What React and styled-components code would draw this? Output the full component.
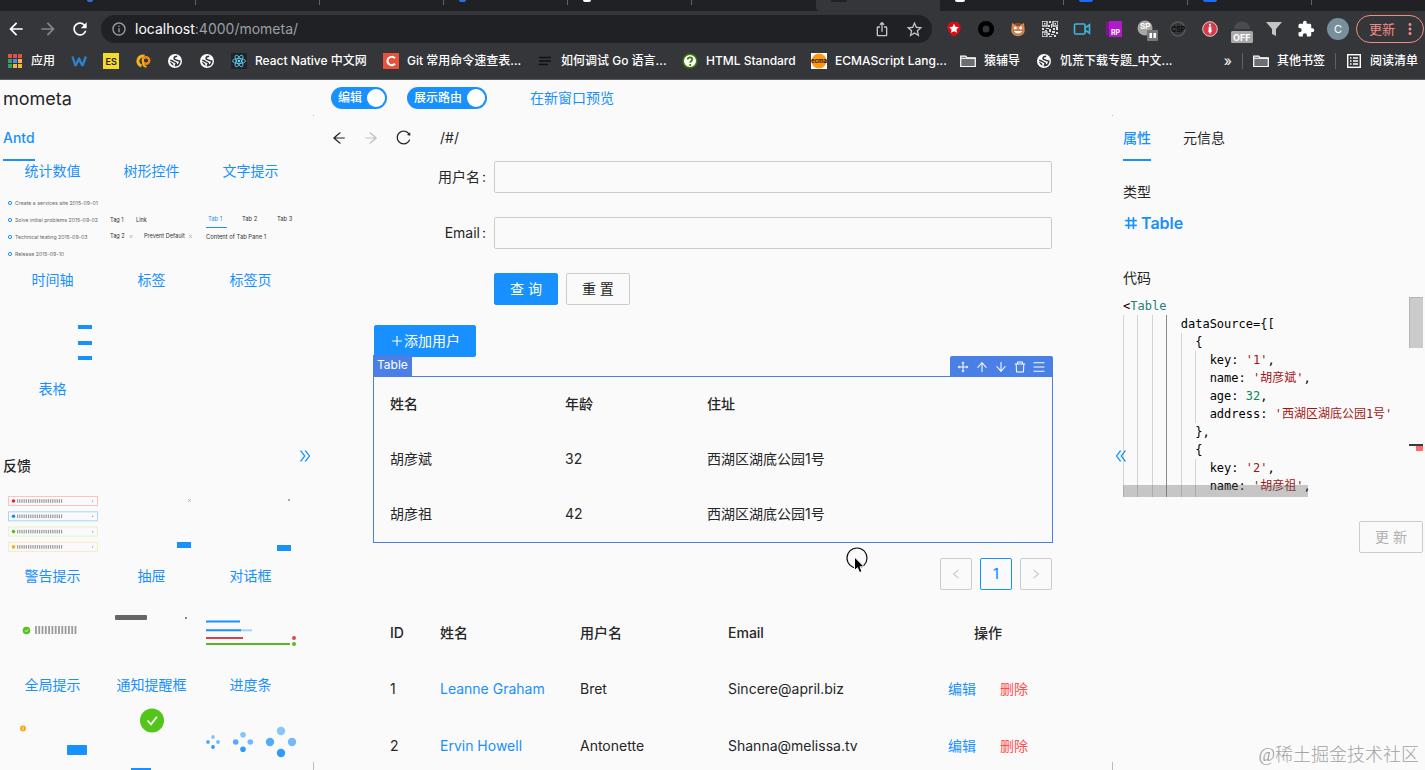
import React from 'react';
import styled, { createGlobalStyle, css } from 'styled-components';
import {
  AiOutlineArrowLeft, AiOutlineArrowRight, AiOutlineArrowUp, AiOutlineArrowDown, AiOutlineReload,
  AiOutlineDoubleRight, AiOutlineDoubleLeft, AiOutlineDrag, AiOutlineDelete, AiOutlineMenu,
  AiOutlineLeft, AiOutlineRight, AiOutlineNumber, AiOutlinePlus,
} from 'react-icons/ai';
import { MdArrowBack, MdArrowForward, MdRefresh, MdInfoOutline, MdIosShare, MdStarOutline, MdExtension, MdMoreVert } from 'react-icons/md';

const BLUE = '#1890ff';
const SELECT = '#4a7fe6';

const GlobalStyle = createGlobalStyle`
  * { box-sizing: border-box; }
  body {
    margin: 0;
    background: #fafafa;
    color: #262626;
    font: 14px/22px Inter, "Noto Sans CJK SC", sans-serif;
  }
  button, input { font: inherit; color: inherit; margin: 0; }
  button { padding: 0; border: 0; background: none; }
  a { text-decoration: none; color: ${BLUE}; }
  svg { display: block; flex: none; }
`;

const Page = styled.div`
  display: flex;
  flex-direction: column;
  height: 100vh;
  overflow: hidden;
  position: relative;
`;

/* ---------- browser frame ---------- */

const TabStrip = styled.div`
  display: flex;
  height: 11px;
  padding-left: 72px;
  background: #202124;
  overflow: hidden;
  flex: none;
`;

const BrowserTab = styled.div`
  width: 124px;
  flex: none;
  height: 5px;
  padding-left: 15px;
  border-right: 1px solid ${(p) => (p.$plain ? 'transparent' : '#5f6368')};
  ${(p) => p.$active && css`
    height: 11px;
    background: #35363a;
    border-color: transparent;
    border-radius: 0 0 0 4px;
  `}
`;

const TabMark = styled.span`
  display: block;
  width: ${(p) => p.$w}px;
  height: 2px;
  border-radius: 0 0 3px 3px;
  background: ${(p) => p.$color};
`;

const Toolbar = styled.div`
  display: flex;
  align-items: center;
  height: 36px;
  padding-right: 1px;
  background: #35363a;
  color: #fff;
  flex: none;
`;

const ToolButton = styled.button`
  display: flex;
  align-items: center;
  justify-content: center;
  width: 32px;
  height: 28px;
  color: ${(p) => p.$color || '#fff'};
`;

const Omnibox = styled.div`
  display: flex;
  align-items: center;
  flex: 1;
  height: 28px;
  margin: 0 6px 0 5px;
  padding: 0 2px 0 10px;
  border-radius: 14px;
  background: #202124;
  color: #9aa0a6;
`;

const Address = styled.div`
  flex: 1;
  padding-left: 8px;
  font-size: 14px;
  line-height: 20px;
  b { font-weight: 400; color: #fff; }
`;

const UpdateButton = styled.button`
  display: flex;
  align-items: center;
  justify-content: space-between;
  width: 68px;
  height: 28px;
  margin-left: 2px;
  padding: 0 4px 0 12px;
  border: 1px solid #f28b82;
  border-radius: 14px;
  color: #f28b82;
  font-size: 13px;
`;

const Avatar = styled.span`
  display: flex;
  align-items: center;
  justify-content: center;
  width: 22px;
  height: 22px;
  border-radius: 50%;
  background: #78909c;
  color: #fff;
  font-size: 11px;
`;

const BookmarkBar = styled.nav`
  display: flex;
  align-items: center;
  gap: 16px;
  height: 33px;
  padding: 0 7px 4px 7px;
  border-bottom: 1px solid #5b5c60;
  background: #35363a;
  flex: none;
`;

const Bookmark = styled.a`
  display: flex;
  align-items: center;
  gap: 8px;
  width: ${(p) => (p.$w ? `${p.$w}px` : 'auto')};
  color: #fff;
  font-size: 12px;
  font-weight: 500;
  line-height: 18px;
  white-space: nowrap;
`;

const BarEnd = styled.div`
  display: flex;
  align-items: center;
  gap: 10px;
  margin-left: auto;
  color: #fff;
  font-size: 14px;
`;

const BarRule = styled.span`
  width: 1px;
  height: 16px;
  background: #5f6368;
`;

/* ---------- workspace ---------- */

const Workspace = styled.div`
  display: grid;
  grid-template-columns: 313px 1px minmax(0, 1fr) 1px 312px;
  flex: 1;
  min-height: 0;
`;

const Divider = styled.div`
  display: flex;
  flex-direction: column;
  justify-content: space-between;
  padding-top: 35px;
  &::before { content: ''; height: 1px; background: #bbb; }
  &::after { content: ''; height: 13px; background: #bbb; }
`;

const Side = styled.aside`
  position: relative;
  display: flex;
  flex-direction: column;
  min-height: 0;
  padding: ${(p) => (p.$right ? '35px 2px 0 10px' : '0 0 0 3px')};
`;

const Brand = styled.h1`
  margin: 0;
  padding-top: 5px;
  height: 35px;
  font-size: 18px;
  line-height: 28px;
  font-weight: 400;
`;

const Tabs = styled.div`
  display: flex;
  gap: 32px;
  flex: none;
`;

const TabButton = styled.button`
  height: 46px;
  padding-top: 2px;
  border-bottom: 2px solid ${(p) => (p.$active ? BLUE : 'transparent')};
  color: ${(p) => (p.$active ? BLUE : 'inherit')};
  font-weight: ${(p) => (p.$active ? 500 : 400)};
`;

const Materials = styled.div`
  flex: 1;
  min-height: 0;
  margin-top: -1px;
  overflow: hidden;
`;

const MaterialGrid = styled.div`
  display: grid;
  grid-template-columns: repeat(3, 99px);
`;

const Material = styled.a`
  display: flex;
  flex-direction: column;
  align-items: center;
  justify-content: flex-end;
`;

const SectionTitle = styled.h2`
  margin: 55px 0 1px;
  font-size: 14px;
  line-height: 22px;
  font-weight: 500;
`;

const Collapse = styled.button`
  position: absolute;
  top: 368px;
  color: ${BLUE};
  ${(p) => (p.$right ? 'left: 0;' : 'right: 0;')}
`;

/* ---------- centre ---------- */

const Center = styled.main`
  min-width: 0;
`;

const ModeBar = styled.div`
  display: flex;
  align-items: center;
  gap: 20px;
  height: 36px;
  padding-left: 17px;
  a { margin-left: 23px; }
`;

const Switch = styled.label`
  display: flex;
  align-items: center;
  gap: 5px;
  height: 22px;
  padding: 0 2px 0 7px;
  border-radius: 11px;
  background: ${BLUE};
  color: #fff;
  font-size: 12px;
  font-weight: 500;
  input {
    appearance: none;
    width: 18px;
    height: 18px;
    border-radius: 50%;
    background: #fff;
  }
`;

const RouteBar = styled.div`
  display: flex;
  align-items: center;
  height: 45px;
  padding: 0 0 2px 17px;
  gap: 16px;
`;

const RouteButton = styled.button`
  color: ${(p) => (p.disabled ? '#bfbfbf' : '#262626')};
`;

const RouteInput = styled.input`
  flex: 1;
  margin-left: 12px;
  border: 0;
  padding: 0;
  background: none;
  outline: 0;
`;

const Canvas = styled.div`
  padding: 0 60px;
`;

const FormRow = styled.div`
  display: flex;
  align-items: center;
  gap: 8px;
  margin-bottom: ${(p) => (p.$last ? 20 : 24)}px;
  padding-left: ${(p) => (p.$last ? 120 : 0)}px;
`;

const FieldLabel = styled.label`
  display: flex;
  justify-content: flex-end;
  gap: 2px;
  width: 112px;
  &::after { content: ':'; }
`;

const TextBox = styled.input`
  flex: 1;
  height: 32px;
  padding: 4px 11px;
  border: 1px solid #ccc;
  border-radius: 2px;
  background: transparent;
`;

const Button = styled.button`
  display: flex;
  align-items: center;
  justify-content: center;
  height: 32px;
  padding: 0 15px;
  border: 1px solid #ccc;
  border-radius: 2px;
  ${(p) => p.$primary && css`
    border-color: ${BLUE};
    background: ${BLUE};
    color: #fff;
  `}
  &:disabled { color: #b0b0b0; }
`;

const Selection = styled.section`
  position: relative;
  margin: 19px -1px 15px;
  border: 1px solid ${SELECT};
`;

const SelectionTag = styled.span`
  position: absolute;
  left: -1px;
  bottom: 100%;
  padding: 0 4px 2px;
  background: ${SELECT};
  color: #fff;
  font-size: 12px;
  line-height: 20px;
`;

const SelectionTools = styled.div`
  position: absolute;
  right: -1px;
  bottom: 100%;
  display: flex;
  align-items: center;
  gap: 5px;
  height: 21px;
  padding: 0 7px 0 6px;
  border-radius: 2px 2px 0 0;
  background: ${SELECT};
  color: #fff;
`;

const Pointer = styled.svg`
  position: absolute;
  right: 183px;
  bottom: -34px;
`;

const DataTable = styled.table`
  width: 100%;
  table-layout: fixed;
  border-collapse: collapse;
  text-align: left;
  th { font-weight: 500; height: 55px; }
  td { height: ${(p) => p.$row}px; }
  th, td { padding: 0 16px 2px; }
`;

const Actions = styled.div`
  display: flex;
  justify-content: center;
  gap: 24px;
`;

const Danger = styled.a`
  color: #ff4d4f;
`;

const Pagination = styled.div`
  display: flex;
  justify-content: flex-end;
  gap: 8px;
  margin-bottom: 16px;
`;

const PageButton = styled.button`
  display: flex;
  align-items: center;
  justify-content: center;
  width: 32px;
  height: 32px;
  border: 1px solid ${(p) => (p.$active ? BLUE : '#ccc')};
  border-radius: 2px;
  color: ${(p) => (p.$active ? BLUE : '#bfbfbf')};
  font-weight: 500;
`;

/* ---------- properties panel ---------- */

const FieldTitle = styled.h3`
  margin: ${(p) => p.$top}px 0 8px;
  font-size: 14px;
  line-height: 22px;
  font-weight: 400;
`;

const TypeLink = styled.a`
  display: flex;
  align-items: center;
  gap: 2px;
  font-size: 16px;
  line-height: 24px;
  font-weight: 600;
  svg { stroke: ${BLUE}; stroke-width: 24px; }
`;

const Editor = styled.div`
  display: flex;
  height: 200px;
  overflow: hidden;
  position: relative;
`;

const CodeLines = styled.div`
  flex: 1;
  font: 12px/18px "DejaVu Sans Mono", "Noto Sans CJK SC", monospace;
  color: #000;
`;

const CodeLine = styled.div`
  display: flex;
  height: 18px;
  white-space: pre;
`;

const Guide = styled.span`
  width: 2ch;
  border-left: 1px solid ${(p) => (p.$current ? '#8a8a8a' : '#d3d3d3')};
`;

const Token = styled.span`
  color: ${(p) => ({ tag: '#267f79', string: '#a31515', number: '#098658' }[p.$kind] || '#000')};
`;

const Ruler = styled.div`
  display: flex;
  flex-direction: column;
  align-items: flex-end;
  width: 14px;
`;

const RulerThumb = styled.span`
  width: 14px;
  height: 51px;
  margin-bottom: 96px;
  border: 1px solid #b5b5b5;
  border-width: 1px 0 0 1px;
  background: #cbcbcb;
`;

const RulerCaret = styled.span`
  width: 14px;
  height: 2px;
  background: #3a3a3a;
`;

const RulerError = styled.span`
  width: 7px;
  height: 5px;
  background: #ff6b6b;
`;

const ScrollThumb = styled.span`
  position: absolute;
  left: 0;
  bottom: 0;
  width: 185px;
  height: 12px;
  background: rgba(100, 100, 100, 0.35);
`;

const PanelFoot = styled.div`
  display: flex;
  justify-content: flex-end;
  padding-top: 24px;
`;

const Watermark = styled.div`
  position: absolute;
  right: 6px;
  bottom: 2px;
  color: #a3a3a3;
  font: 300 18px/26px "Liberation Serif", "Noto Sans CJK SC", serif;
`;

/* ---------- icons ---------- */

const Svg = ({ w = 20, h = 20, children }) => (
  <svg width={w} height={h} viewBox={`0 0 ${w} ${h}`} fill="none" aria-hidden="true">{children}</svg>
);

const Globe = () => (
  <Svg w={16} h={16}>
    <circle cx="8" cy="8" r="7" fill="#fff" />
    <path d="M10.200 3.200C8.600 3.300 7 4 7 5.400c0 1.300 1.300 1.200 2.300 1.500 1.200.3 1.500 1.400 3.600 1-.2 2.600-2 4.600-4.500 4.900.2-1 .9-1.200.9-2.200 0-1.200-1.400-1-2.200-1.600C6 8.200 5 7.400 3.200 7.200" stroke="#35363a" strokeWidth="1.500" strokeLinejoin="round" />
    <path d="M3.200 8.500l3 2.300.3 1.900C4.500 12 3.300 10.500 3.200 8.500z" fill="#35363a" />
  </Svg>
);

const Folder = () => (
  <Svg w={16} h={16}>
    <path d="M.7 3.200h5l1.500 1.700h8.100v8.600H.7z" fill="#6d6e71" stroke="#fff" strokeWidth="1.200" />
    <path d="M.7 5.300h14.600" stroke="#fff" />
  </Svg>
);

const Apps = () => (
  <Svg w={16} h={16}>
    {['#e05244', '#e05244', '#e05244', '#35a05a', '#4d8bf0', '#f2b63c', '#35a05a', '#f2b63c', '#f2b63c'].map((c, i) => (
      <rect key={i} x={1 + (i % 3) * 5} y={1 + Math.floor(i / 3) * 5} width="4" height="4" fill={c} />
    ))}
  </Svg>
);

const QrIcon = () => (
  <Svg w={16} h={16}>
    <path d="M0 0h5v5H0zM11 0h5v5h-5zM0 11h5v5H0z" stroke="#ddd" strokeWidth="1.400" />
    <path d="M2 2h1.500v1.500H2zM12.500 2H14v1.500h-1.500zM2 12.500h1.500V14H2zM7 0h2v2H7zM6 4h2v2H6zM9 3h1v4H9zM0 7h2v2H0zM4 7h3v1H4zM7 8h2v3H7zM11 7h2v2h-2zM14 6h2v3h-2zM10 10h3v2h-3zM14 11h2v2h-2zM6 12h2v2H6zM9 13h3v1H9zM12 14h2v2h-2zM7 15h3v1H7zM3 9h2v1H3z" fill="#ddd" />
  </Svg>
);

const extensions = [
  ['收藏', <Svg><path d="M10 17.500C5 15.500 3.200 11 3.300 6.500L6.500 3h7l3.200 3.500c.1 4.500-1.700 9-6.700 11z" fill="#d40f14" /><path d="M10 4.800l1.500 3 3.300.4-2.400 2.300.6 3.300-3-1.600-3 1.600.6-3.300-2.400-2.300 3.300-.4z" fill="#fff" /></Svg>],
  ['圆环', <Svg><circle cx="10" cy="10" r="5.800" stroke="#000" strokeWidth="4.500" /></Svg>],
  ['猫头', <Svg><path d="M4 4l3 1.500h6L16 4l.7 7c0 4-3.200 6.200-6.700 6.200S3.300 15 3.300 11z" fill="#d9854f" /><path d="M7 4h6l-1 3H8z" fill="#8c4a2a" /><circle cx="7.300" cy="9" r="1.400" fill="#fff" /><circle cx="12.700" cy="9" r="1.400" fill="#fff" /><path d="M5.500 11.500h9c-.5 4.500-8.500 4.500-9 0z" fill="#fff" stroke="#8c4a2a" strokeWidth=".6" /></Svg>],
  ['二维码', <QrIcon />],
  ['录屏', <Svg><rect x="2.500" y="5" width="10.500" height="10" rx="1" stroke="#3fb6d9" strokeWidth="1.600" /><path d="M13 9l4.500-3.200v8.400L13 11" stroke="#3fb6d9" strokeWidth="1.600" /></Svg>],
  ['RP', <Svg><path d="M2 2l4 2v12l-4 1z" fill="#7b1591" /><path d="M5 2h13v16H5z" fill="#b01bc9" /><text x="7" y="16" fontSize="7" fontWeight="700" fill="#fff">RP</text></Svg>],
  ['SP', <Svg w={24} h={24}><circle cx="11" cy="11" r="7.500" fill="#a6a6a6" /><text x="6" y="12" fontSize="8" fontWeight="700" fill="#fff">SP</text><rect x="13" y="13" width="11" height="11" rx="1" fill="#777" /><path d="M15.500 16h2.500v5h-2.500zM19.500 16H22v5h-2.500z" fill="#fff" /></Svg>],
  ['CSP', <Svg><circle cx="10" cy="10" r="7" stroke="#57585b" strokeWidth="1.500" /><text x="3" y="12.500" fontSize="7" fontWeight="700" fill="#0c0c0c">CSP</text></Svg>],
  ['提示', <Svg><circle cx="10" cy="10" r="7.300" fill="#d63a4d" stroke="#e9c9cc" strokeWidth="1" /><circle cx="10" cy="5.800" r="1.100" fill="#fff" /><path d="M8.800 7.500h2.400l.4 5-1.600 2.500-1.600-2.500z" fill="#fff" /></Svg>],
  ['OFF', <Svg w={24} h={28}><path d="M4 14c0-10 16-10 16 0z" fill="#4a4b4e" /><rect x="1" y="16" width="22" height="12" rx="1.500" fill="#a9a9a9" /><text x="3" y="25.500" fontSize="9" fontWeight="700" fill="#fff">OFF</text></Svg>],
  ['筛选', <Svg><path d="M2 3h16l-6 7v7l-4-2v-5z" fill="#c4c4c4" /></Svg>],
  ['扩展程序', <MdExtension size={18} />],
];

const bookmarks = [
  ['应用', 48, <Apps />],
  ['', 16, <Svg w={16} h={16}><path d="M1.500 3.500l2.700 8.500h.8L8 5.500l3 6.500h.8l3-8.500" stroke="#2f80c8" strokeWidth="2.400" strokeLinejoin="round" /></Svg>],
  ['', 16, <Svg w={16} h={16}><rect width="16" height="16" fill="#f5da2a" /><text x="2.500" y="12" fontSize="9" fontWeight="600" fill="#222">ES</text></Svg>],
  ['', 16, <Svg w={16} h={16}><path d="M9.500 3.200A5 5 0 1 0 6.500 13" stroke="#f5b21c" strokeWidth="3" /><circle cx="11" cy="7.500" r="3.300" stroke="#f0861a" strokeWidth="2.400" /><path d="M8 5.500v4.500c0 2 1.500 3.500 3.500 4" stroke="#f5b21c" strokeWidth="1.800" /></Svg>],
  ['', 16, <Globe />],
  ['', 16, <Globe />],
  ['React Native 中文网', 136, <Svg w={16} h={16}><rect width="16" height="16" fill="#20232a" />{[0, 60, 120].map((a) => <ellipse key={a} cx="8" cy="8" rx="6.500" ry="2.500" stroke="#61dafb" strokeWidth=".8" transform={`rotate(${a} 8 8)`} />)}<circle cx="8" cy="8" r="1.300" fill="#61dafb" /></Svg>],
  ['Git 常用命令速查表...', 138, <Svg w={16} h={16}><rect width="16" height="16" fill="#e8513a" /><path d="M12 5.200C9.500 2.500 4.500 4 4.500 8s5 5.500 7.500 2.800" stroke="#fff" strokeWidth="2" /></Svg>],
  ['如何调试 Go 语言...', 129, <Svg w={16} h={16}><path d="M2 4.500h12M2 8h12M2 11.500h9" stroke="#111" strokeWidth="1.300" /></Svg>],
  ['HTML Standard', 113, <Svg w={16} h={16}><circle cx="8" cy="8" r="6.800" fill="#fff" stroke="#3c790a" strokeWidth="1.600" /><path d="M5.600 6.500C6 3.300 10.500 3.800 10.300 6.500 10.200 8 8.200 8 8.200 9.800M8.200 11v1.800" stroke="#3c790a" strokeWidth="1.800" /></Svg>],
  ['ECMAScript Lang...', 133, <Svg w={16} h={16}><rect width="16" height="16" fill="#fff" /><circle cx="8" cy="8" r="7.500" fill="#ff9a10" /><text x="0" y="10" fontSize="6" fontWeight="700" fill="#111">ecma</text></Svg>],
  ['猿辅导', 60, <Folder />],
  ['饥荒下载专题_中文...', 0, <Globe />],
];

const Stripes = ({ x, y, n, h, step = 2.200, w = 1.200 }) => (
  <>{Array.from({ length: n }, (_, i) => <rect key={i} x={x + i * step} y={y} width={w} height={h} fill="#9b9b9b" />)}</>
);

const Thumb = ({ children }) => <Svg w={99} h={87}>{children}</Svg>;

const Timeline = () => (
  <Thumb>
    {['Create a services site 2015-09-01', 'Solve initial problems 2015-09-02', 'Technical testing 2015-09-03', 'Release 2015-09-10'].map((t, i) => (
      <g key={t}>
        <circle cx="7" cy={21 + i * 17} r="1.600" stroke={BLUE} />
        <text x="12" y={23 + i * 17} fontSize="5.200" fill="#666">{t}</text>
      </g>
    ))}
  </Thumb>
);

const Tags = () => (
  <Thumb>
    <g fontSize="5.600" fill="#333">
      <text x="8" y="40">Tag 1</text><text x="34" y="40">Link</text>
      <text x="8" y="56">Tag 2</text><text x="42" y="56">Prevent Default</text>
    </g>
    <path d="M27.500 53l3 3m0-3l-3 3M87 53l3 3m0-3l-3 3" stroke="#999" strokeWidth=".6" />
  </Thumb>
);

const TabsThumb = () => (
  <Thumb>
    <g fontSize="5.800" fill="#333">
      <text x="7" y="39" fill={BLUE}>Tab 1</text><text x="41" y="39">Tab 2</text><text x="76" y="39">Tab 3</text>
      <text x="5" y="57">Content of Tab Pane 1</text>
    </g>
    <path d="M5 45.500h21" stroke={BLUE} />
  </Thumb>
);

const TableThumb = () => (
  <Thumb>{[34, 50, 65].map((y) => <rect key={y} x="75" y={y} width="14" height="4" fill={BLUE} />)}</Thumb>
);

const AlertThumb = () => (
  <Thumb>
    {[['#f5222d', '#ffc1bd'], [BLUE, '#a9d4ff'], ['#52c41a', '#e6f3cb'], ['#faad14', '#f6ecbc']].map(([dot, line], i) => (
      <g key={dot}>
        <rect x="5.500" y={18.500 + i * 15.300} width="89" height="9" stroke={line} />
        <circle cx="10.500" cy={23 + i * 15.300} r="1.800" fill={dot} />
        <Stripes x={14} y={21.200 + i * 15.300} n={21} h={3.600} />
        <rect x="89" y={22.500 + i * 15.300} width="1.200" height="1.200" fill="#999" />
      </g>
    ))}
  </Thumb>
);

const DrawerThumb = () => (
  <Thumb><path d="M86 21l3 3m0-3l-3 3" stroke="#999" strokeWidth=".6" /><rect x="75" y="64" width="14" height="6" fill={BLUE} /></Thumb>
);

const ModalThumb = () => (
  <Thumb><rect x="87" y="21" width="2" height="2" fill="#aaa" /><rect x="76" y="67" width="14" height="6" fill={BLUE} /></Thumb>
);

const MessageThumb = () => (
  <Thumb>
    <circle cx="23.500" cy="43.500" r="3.800" fill="#52c41a" /><path d="M21.800 43.500l1.300 1.300 2.200-2.600" stroke="#fff" strokeWidth=".8" />
    <Stripes x={32} y={39} n={13} h={8} step={3.300} w={1.800} />
  </Thumb>
);

const NoticeThumb = () => (
  <Thumb><rect x="13" y="28" width="32" height="5" rx="1" fill="#666" /><rect x="83" y="30" width="2" height="2" fill="#888" /></Thumb>
);

const ProgressThumb = () => (
  <Thumb>
    <g strokeWidth="2">
      <path d="M5 34.500h34" stroke={BLUE} /><path d="M39 43.300h12" stroke="#a5d3ff" /><path d="M5 43.300h35" stroke={BLUE} />
      <path d="M5 51h37" stroke="#d9424a" /><path d="M5 57h84" stroke="#52b92c" />
    </g>
    <circle cx="93" cy="51" r="2" fill="#e64545" /><circle cx="93" cy="57" r="2" fill="#52b92c" />
  </Thumb>
);

const ConfirmThumb = () => (
  <Thumb><circle cx="20" cy="32.500" r="3" fill="#f5a81c" /><path d="M20 31v3" stroke="#fff" strokeWidth=".7" /><rect x="64" y="49" width="20" height="10" rx="1" fill={BLUE} /></Thumb>
);

const ResultThumb = () => (
  <Thumb><circle cx="50" cy="24.500" r="12" fill="#52c41a" /><path d="M45.500 24.500l3.500 3.800 6-7.500" stroke="#fff" strokeWidth="1.800" /><rect x="29" y="72" width="20" height="10" fill={BLUE} /></Thumb>
);

const SpinThumb = () => (
  <Thumb>
    {[[12, 46, 5, 1.900], [42, 46, 7.300, 2.800], [80, 46, 11, 4.200]].map(([x, y, d, r]) => (
      <g key={x} fill={BLUE}>
        <circle cx={x} cy={y - d} r={r} opacity=".5" /><circle cx={x + d} cy={y} r={r} opacity=".6" />
        <circle cx={x} cy={y + d} r={r} opacity=".9" /><circle cx={x - d} cy={y} r={r} opacity=".75" />
      </g>
    ))}
  </Thumb>
);

const dataDisplay = [
  ['统计数值'], ['树形控件'], ['文字提示'],
  ['时间轴', Timeline], ['标签', Tags], ['标签页', TabsThumb],
  ['表格', TableThumb],
];

const feedback = [
  ['警告提示', AlertThumb], ['抽屉', DrawerThumb], ['对话框', ModalThumb],
  ['全局提示', MessageThumb], ['通知提醒框', NoticeThumb], ['进度条', ProgressThumb],
  ['', ConfirmThumb], ['', ResultThumb], ['', SpinThumb],
];

const MaterialList = ({ items }) => (
  <MaterialGrid>
    {items.map(([name, Drawing], i) => (
      <Material key={i} href="#">{Drawing && <Drawing />}{name}</Material>
    ))}
  </MaterialGrid>
);

const people = [['胡彦斌', 32, '西湖区湖底公园1号'], ['胡彦祖', 42, '西湖区湖底公园1号']];

const users = [
  [1, 'Leanne Graham', 'Bret', 'Sincere@april.biz'],
  [2, 'Ervin Howell', 'Antonette', 'Shanna@melissa.tv'],
];

const code = [
  [0, [['<'], ['Table', 'tag']]],
  [4, [['dataSource={[']]],
  [5, [['{']]],
  [6, [['key: '], ["'1'", 'string'], [',']]],
  [6, [['name: '], ["'胡彦斌'", 'string'], [',']]],
  [6, [['age: '], ['32', 'number'], [',']]],
  [6, [['address: '], ["'西湖区湖底公园1号'", 'string']]],
  [5, [['},']]],
  [5, [['{']]],
  [6, [['key: '], ["'2'", 'string'], [',']]],
  [6, [['name: '], ["'胡彦祖'", 'string'], [',']]],
  [6, []],
];

export default function App() {
  return (
    <>
      <GlobalStyle />
      <Page>
        <TabStrip>
          <BrowserTab><TabMark $w={6} $color="#2f6fed" /></BrowserTab>
          <BrowserTab /><BrowserTab />
          <BrowserTab><TabMark $w={7} $color="#2f6fed" /></BrowserTab>
          <BrowserTab><TabMark $w={8} $color="#fff" /></BrowserTab>
          <BrowserTab $plain />
          <BrowserTab $active><TabMark $w={16} $color="#202124" /></BrowserTab>
          <BrowserTab><TabMark $w={10} $color="#fff" /></BrowserTab>
          <BrowserTab><TabMark $w={14} $color="#1a6cff" /></BrowserTab>
          <BrowserTab><TabMark $w={14} $color="#1a6cff" /></BrowserTab>
        </TabStrip>
        <Toolbar>
          <ToolButton aria-label="后退"><MdArrowBack size={20} /></ToolButton>
          <ToolButton aria-label="前进" $color="#85878a"><MdArrowForward size={20} /></ToolButton>
          <ToolButton aria-label="刷新"><MdRefresh size={20} /></ToolButton>
          <Omnibox>
            <MdInfoOutline size={16} />
            <Address><b>localhost</b>:4000/mometa/</Address>
            <ToolButton aria-label="分享" $color="#c4c7c9"><MdIosShare size={16} /></ToolButton>
            <ToolButton aria-label="加入书签" $color="#c4c7c9"><MdStarOutline size={19} /></ToolButton>
          </Omnibox>
          {extensions.map(([name, icon]) => (
            <ToolButton key={name} aria-label={name}>{icon}</ToolButton>
          ))}
          <ToolButton aria-label="账号"><Avatar>C</Avatar></ToolButton>
          <UpdateButton>更新<MdMoreVert size={18} /></UpdateButton>
        </Toolbar>
        <BookmarkBar>
          {bookmarks.map(([name, w, icon], i) => (
            <Bookmark key={i} href="#" $w={w}>{icon}{name}</Bookmark>
          ))}
          <BarEnd>
            »<BarRule />
            <Bookmark href="#"><Folder />其他书签</Bookmark>
            <BarRule />
            <Bookmark href="#">
              <Svg w={16} h={16}><rect x="1.700" y="1.700" width="12.600" height="12.600" stroke="#fff" strokeWidth="1.400" /><path d="M4 5h1.500M4 8h1.500M4 11h1.500M7 5h5M7 8h5M7 11h5" stroke="#fff" strokeWidth="1.300" /></Svg>
              阅读清单
            </Bookmark>
          </BarEnd>
        </BookmarkBar>

        <Workspace>
          <Side>
            <Brand>mometa</Brand>
            <Tabs><TabButton $active>Antd</TabButton></Tabs>
            <Materials>
              <MaterialList items={dataDisplay} />
              <SectionTitle>反馈</SectionTitle>
              <MaterialList items={feedback.slice(0, 6)} />
              <MaterialList items={feedback.slice(6)} />
            </Materials>
            <Collapse aria-label="收起"><AiOutlineDoubleRight size={16} /></Collapse>
          </Side>
          <Divider />
          <Center>
            <ModeBar>
              <Switch>编辑<input type="checkbox" defaultChecked /></Switch>
              <Switch>展示路由<input type="checkbox" defaultChecked /></Switch>
              <a href="#">在新窗口预览</a>
            </ModeBar>
            <RouteBar>
              <RouteButton aria-label="后退"><AiOutlineArrowLeft size={16} /></RouteButton>
              <RouteButton aria-label="前进" disabled><AiOutlineArrowRight size={16} /></RouteButton>
              <RouteButton aria-label="刷新"><AiOutlineReload size={17} /></RouteButton>
              <RouteInput aria-label="路由" defaultValue="/#/" />
            </RouteBar>
            <Canvas>
              <FormRow><FieldLabel htmlFor="name">用户名</FieldLabel><TextBox id="name" /></FormRow>
              <FormRow><FieldLabel htmlFor="email">Email</FieldLabel><TextBox id="email" /></FormRow>
              <FormRow $last><Button $primary>查 询</Button><Button>重 置</Button></FormRow>
              <Button $primary><AiOutlinePlus size={14} />添加用户</Button>
              <Selection>
                <SelectionTag>Table</SelectionTag>
                <SelectionTools>
                  <button aria-label="移动"><AiOutlineDrag size={14} /></button>
                  <button aria-label="上移"><AiOutlineArrowUp size={14} /></button>
                  <button aria-label="下移"><AiOutlineArrowDown size={14} /></button>
                  <button aria-label="删除"><AiOutlineDelete size={14} /></button>
                  <button aria-label="菜单"><AiOutlineMenu size={14} /></button>
                </SelectionTools>
                <DataTable $row={55}>
                  <colgroup><col width="175" /><col width="142" /><col /></colgroup>
                  <thead><tr><th>姓名</th><th>年龄</th><th>住址</th></tr></thead>
                  <tbody>
                    {people.map((row) => <tr key={row[0]}>{row.map((v) => <td key={v}>{v}</td>)}</tr>)}
                  </tbody>
                </DataTable>
                <Pointer width="24" height="30" viewBox="0 0 24 30" fill="none">
                  <circle cx="12" cy="12" r="10" stroke="#111" strokeWidth="1.200" />
                  <path d="M9.500 11v13.500l3-2.800 2 4.800 2.500-1-2-4.700h4.200z" fill="#000" stroke="#fff" />
                </Pointer>
              </Selection>
              <Pagination>
                <PageButton aria-label="上一页" disabled><AiOutlineLeft size={12} /></PageButton>
                <PageButton $active>1</PageButton>
                <PageButton aria-label="下一页" disabled><AiOutlineRight size={12} /></PageButton>
              </Pagination>
              <DataTable $row={57}>
                <colgroup><col width="50" /><col width="140" /><col width="148" /><col /><col width="128" /></colgroup>
                <thead>
                  <tr><th>ID</th><th>姓名</th><th>用户名</th><th>Email</th><th><Actions>操作</Actions></th></tr>
                </thead>
                <tbody>
                  {users.map(([id, name, login, mail]) => (
                    <tr key={id}>
                      <td>{id}</td><td><a href="#">{name}</a></td><td>{login}</td><td>{mail}</td>
                      <td><Actions><a href="#">编辑</a><Danger href="#">删除</Danger></Actions></td>
                    </tr>
                  ))}
                </tbody>
              </DataTable>
            </Canvas>
          </Center>
          <Divider />
          <Side $right>
            <Tabs><TabButton $active>属性</TabButton><TabButton>元信息</TabButton></Tabs>
            <FieldTitle $top={20}>类型</FieldTitle>
            <TypeLink href="#"><AiOutlineNumber size={16} />Table</TypeLink>
            <FieldTitle $top={32}>代码</FieldTitle>
            <Editor>
              <CodeLines>
                {code.map(([depth, tokens], i) => (
                  <CodeLine key={i}>
                    {Array.from({ length: depth }, (_, g) => <Guide key={g} $current={g === 3} />)}
                    {tokens.map(([text, kind], t) => <Token key={t} $kind={kind}>{text}</Token>)}
                  </CodeLine>
                ))}
              </CodeLines>
              <Ruler><RulerThumb /><RulerCaret /><RulerError /></Ruler>
              <ScrollThumb />
            </Editor>
            <PanelFoot><Button disabled>更 新</Button></PanelFoot>
            <Collapse $right aria-label="展开"><AiOutlineDoubleLeft size={16} /></Collapse>
          </Side>
        </Workspace>
        <Watermark>@稀土掘金技术社区</Watermark>
      </Page>
    </>
  );
}
